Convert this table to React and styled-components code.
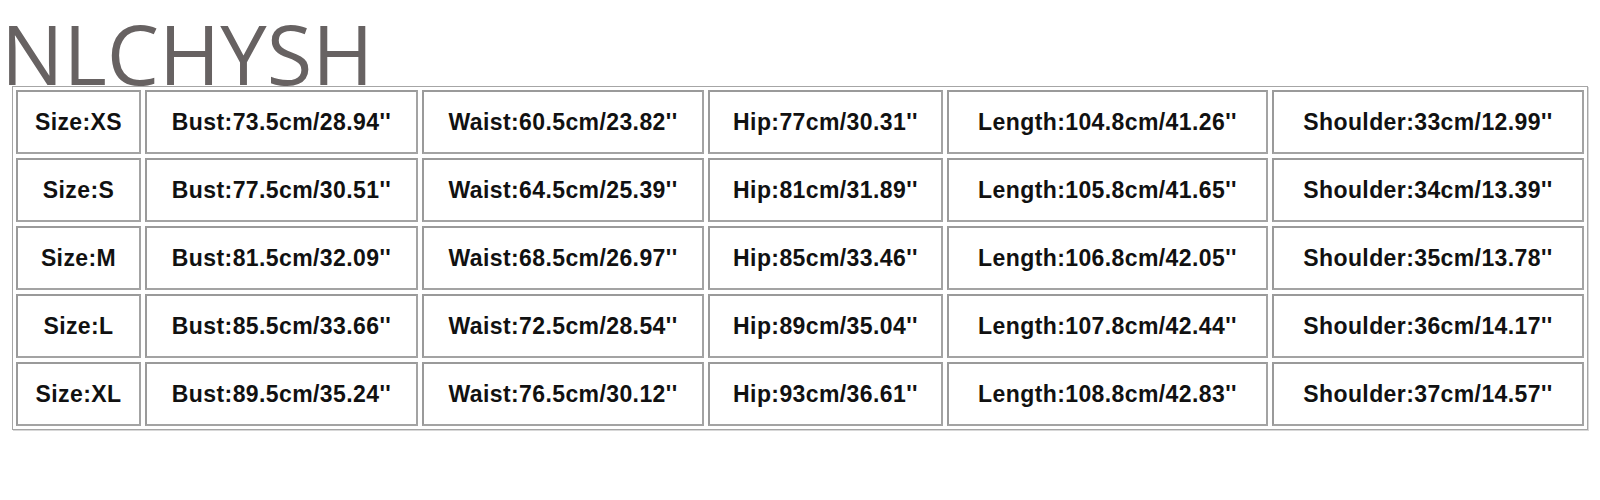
import React from "react";
import styled, { createGlobalStyle } from "styled-components";

const Global = createGlobalStyle`
  html, body { margin: 0; padding: 0; background: #ffffff; }
  body { font-family: "Liberation Sans", Arial, sans-serif; }
`;

const Page = styled.div`
  display: flex;
  flex-direction: column;
  align-items: flex-start;
  width: 1600px;
  height: 500px;
  background: #fff;
`;

const Brand = styled.h1`
  margin: 0 0 -10px 0;
  padding: 10px 0 0 1px;
  font-family: "Open Sans", "Noto Sans", sans-serif;
  font-weight: 400;
  font-size: 83px;
  line-height: 86px;
  color: #676262;
`;

const SizeTable = styled.div`
  position: relative;
  margin-left: 12px;
  display: grid;
  grid-template-columns: 125px 273px 282px 235px 321px 312px;
  grid-auto-rows: 64px;
  gap: 4px;
  padding: 3px;
  border: 1px solid #a6a6a6;
  box-shadow: 1px 1px 0 #d8d8d8;
  background: #fff;
`;

const Cell = styled.div`
  display: flex;
  align-items: center;
  justify-content: center;
  border: 2px solid #a3a3a3;
  border-top-color: #9a9a9a;
  border-left-color: #9a9a9a;
  font-family: "Liberation Sans", Arial, sans-serif;
  font-weight: 700;
  font-size: 23px;
  letter-spacing: 0.4px;
  color: #111;
  white-space: nowrap;
`;

const rows = [
  ["Size:XS", "Bust:73.5cm/28.94''", "Waist:60.5cm/23.82''", "Hip:77cm/30.31''", "Length:104.8cm/41.26''", "Shoulder:33cm/12.99''"],
  ["Size:S", "Bust:77.5cm/30.51''", "Waist:64.5cm/25.39''", "Hip:81cm/31.89''", "Length:105.8cm/41.65''", "Shoulder:34cm/13.39''"],
  ["Size:M", "Bust:81.5cm/32.09''", "Waist:68.5cm/26.97''", "Hip:85cm/33.46''", "Length:106.8cm/42.05''", "Shoulder:35cm/13.78''"],
  ["Size:L", "Bust:85.5cm/33.66''", "Waist:72.5cm/28.54''", "Hip:89cm/35.04''", "Length:107.8cm/42.44''", "Shoulder:36cm/14.17''"],
  ["Size:XL", "Bust:89.5cm/35.24''", "Waist:76.5cm/30.12''", "Hip:93cm/36.61''", "Length:108.8cm/42.83''", "Shoulder:37cm/14.57''"],
];

export default function App() {
  return (
    <>
      <Global />
      <Page>
        <Brand>NLCHYSH</Brand>
        <SizeTable>
          {rows.map((r, i) =>
            r.map((c, j) => <Cell key={`${i}-${j}`}>{c}</Cell>)
          )}
        </SizeTable>
      </Page>
    </>
  );
}
